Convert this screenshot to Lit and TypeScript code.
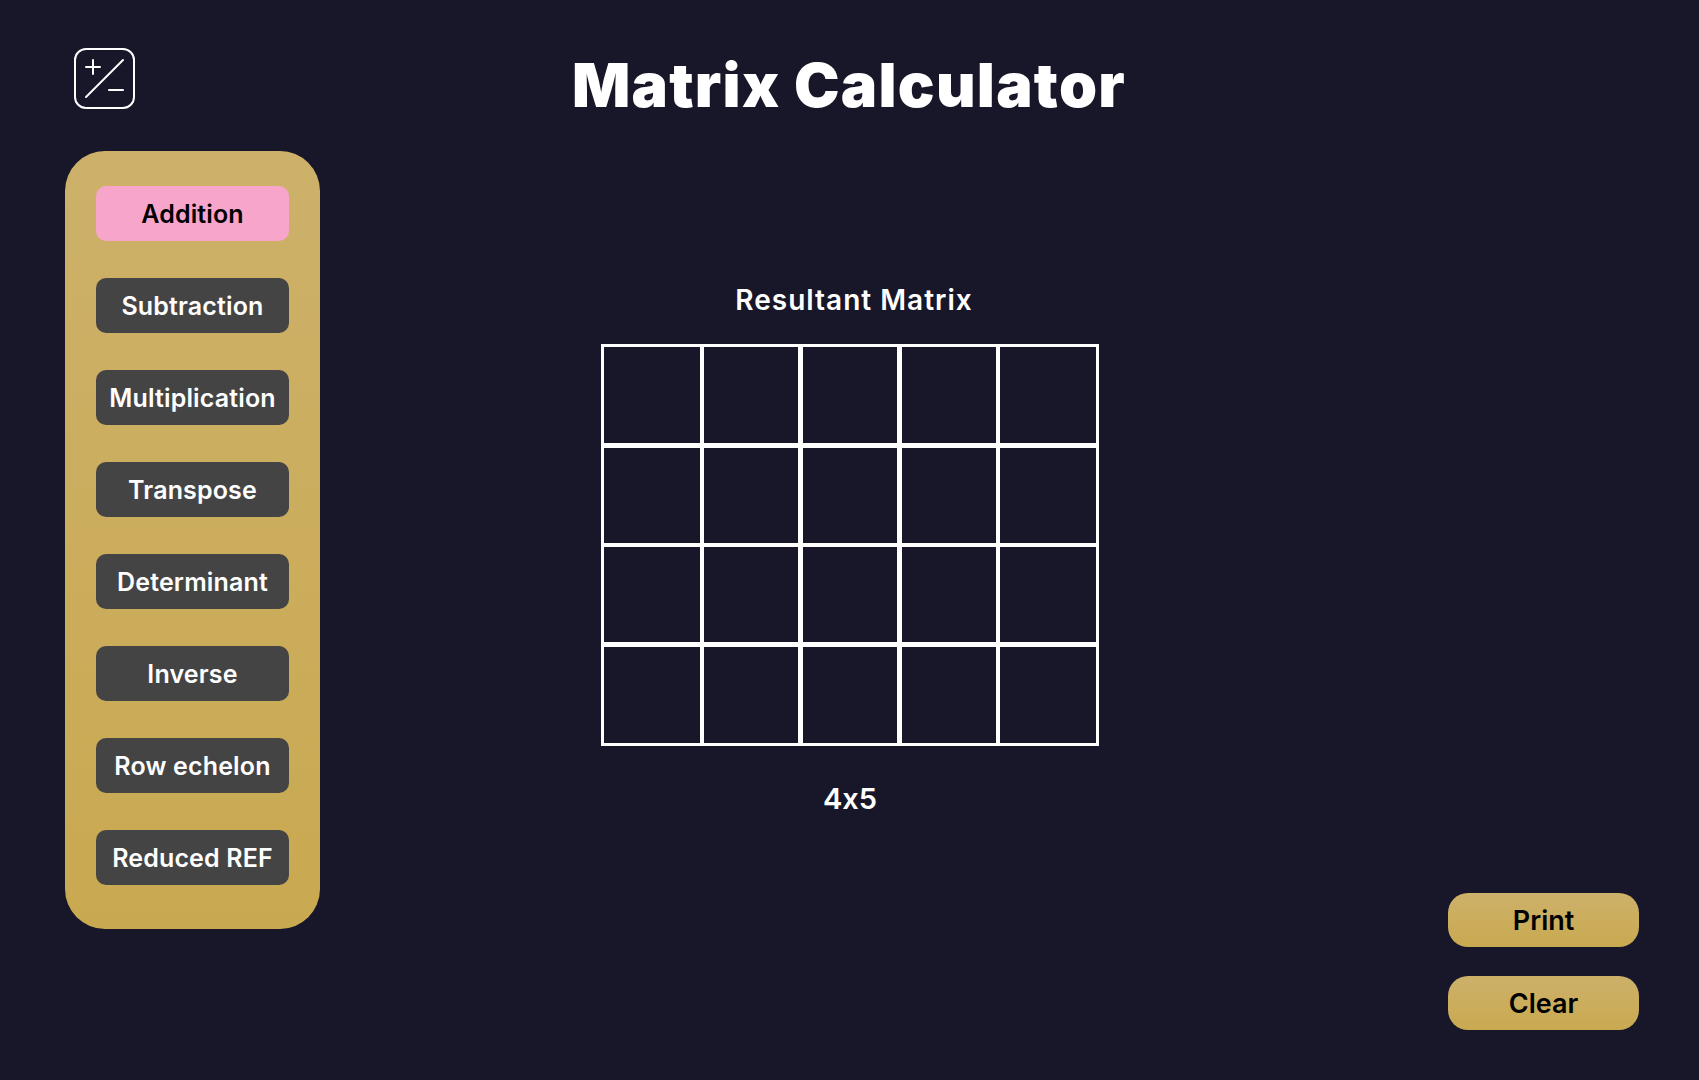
import { LitElement, html, css } from 'lit';
import { customElement, state } from 'lit/decorators.js';

const OPERATIONS = [
  'Addition',
  'Subtraction',
  'Multiplication',
  'Transpose',
  'Determinant',
  'Inverse',
  'Row echelon',
  'Reduced REF'
];

const ROWS = 4;
const COLS = 5;

@customElement('app-root')
export class AppRoot extends LitElement {
  @state() active = 'Addition';

  static styles = css`
    :host {
      display: block;
      font-family: Inter, 'Liberation Sans', sans-serif;
      color: #fff;
    }

    .page {
      height: 1080px;
      box-sizing: border-box;
      background: #171729;
      display: flex;
      flex-direction: column;
      overflow: hidden;
    }

    /* Header row with logo and title */
    .header {
      height: 151px;
      flex: none;
      box-sizing: border-box;
      padding: 48px 0 0 74px;
      display: flex;
      align-items: flex-start;
    }

    .logo {
      width: 61px;
      height: 61px;
      flex: none;
      display: block;
    }

    .title {
      margin: -5px 0 0 426px;
      width: 576px;
      text-align: center;
      font-size: 61px;
      line-height: 84px;
      font-weight: 900;
      letter-spacing: 1.3px;
    }

    .body {
      flex: 1;
      display: flex;
      min-height: 0;
      padding-bottom: 50px;
    }

    /* Sidebar with operation buttons */
    .sidebar {
      margin-left: 65px;
      width: 255px;
      height: 778px;
      flex: none;
      box-sizing: border-box;
      padding-top: 35px;
      border-radius: 40px;
      background: linear-gradient(180deg, #cdb16a 0%, #c9a950 100%);
      display: flex;
      flex-direction: column;
      align-items: center;
      gap: 37px;
    }

    .op {
      width: 193px;
      height: 55px;
      flex: none;
      padding: 0;
      border: none;
      border-radius: 10px;
      background: #444444;
      color: #fff;
      font-family: inherit;
      font-size: 25px;
      font-weight: 600;
      letter-spacing: 0.15px;
      white-space: nowrap;
      cursor: pointer;
    }

    .op.active {
      background: #f7a5cb;
      color: #000;
    }

    /* Result matrix */
    .result {
      margin-left: 281px;
      width: 498px;
      flex: none;
      display: flex;
      flex-direction: column;
      align-items: center;
      padding-top: 129px;
    }

    .result h2 {
      margin: 0 0 24px 8px;
      height: 40px;
      font-size: 28px;
      line-height: 40px;
      font-weight: 600;
      letter-spacing: 1px;
    }

    .matrix {
      display: grid;
      grid-template-columns: 96px 4px 94px 5px 94px 5px 94px 4px 96px;
      grid-template-rows: 96px 5px 95px 4px 95px 5px 96px;
      padding: 3px;
      background: #fff;
    }

    .cell {
      background: #171729;
    }

    .size {
      margin-top: 35px;
      font-size: 29px;
      line-height: 36px;
      font-weight: 600;
      font-feature-settings: 'calt' 0;
    }

    /* Print and clear */
    .actions {
      margin-left: auto;
      margin-right: 60px;
      align-self: flex-end;
      display: flex;
      flex-direction: column;
      gap: 29px;
    }

    .action {
      width: 191px;
      height: 54px;
      padding: 0;
      border: none;
      border-radius: 20px;
      background: linear-gradient(180deg, #cdb16a 0%, #c9a950 100%);
      color: #000;
      font-family: inherit;
      font-size: 27px;
      font-weight: 600;
      cursor: pointer;
    }
  `;

  renderCells() {
    const cells = [];
    for (let r = 0; r < ROWS; r++) {
      for (let c = 0; c < COLS; c++) {
        cells.push(html`<div class="cell" style="grid-area: ${r * 2 + 1} / ${c * 2 + 1}"></div>`);
      }
    }
    return cells;
  }

  render() {
    return html`
      <div class="page">
        <div class="header">
          <svg class="logo" viewBox="0 0 61 61" fill="none" stroke="#fff" stroke-width="2" stroke-linecap="round">
            <rect x="1" y="1" width="59" height="59" rx="11" />
            <path d="M12 19h14M19 12v14" />
            <path d="M12 49L49 12" />
            <path d="M35 42h14" />
          </svg>
          <h1 class="title">Matrix Calculator</h1>
        </div>
        <div class="body">
          <nav class="sidebar">
            ${OPERATIONS.map(
              (op) => html`
                <button class="op ${op === this.active ? 'active' : ''}" @click=${() => (this.active = op)}>${op}</button>
              `
            )}
          </nav>
          <section class="result">
            <h2>Resultant Matrix</h2>
            <div class="matrix">${this.renderCells()}</div>
            <div class="size">${ROWS}x${COLS}</div>
          </section>
          <div class="actions">
            <button class="action">Print</button>
            <button class="action">Clear</button>
          </div>
        </div>
      </div>
    `;
  }
}
